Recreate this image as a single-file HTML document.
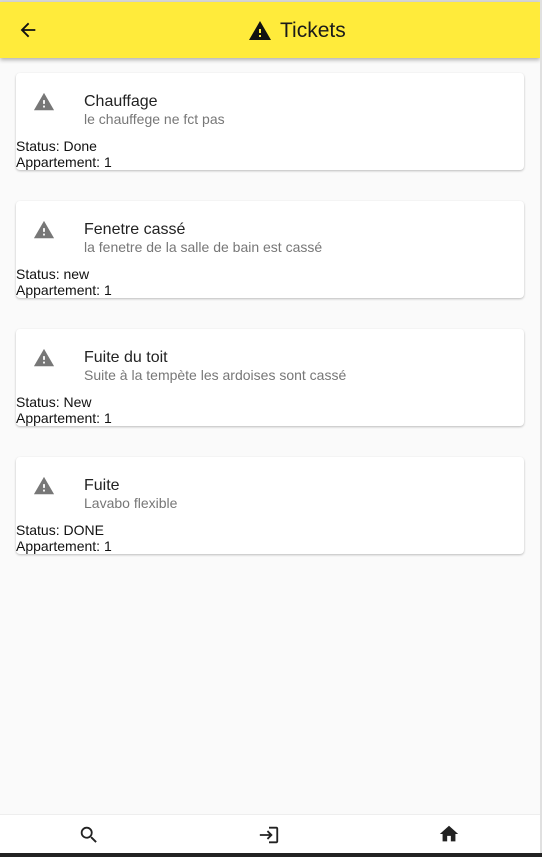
<!DOCTYPE html>
<html><head><style>
*{margin:0;padding:0;box-sizing:border-box}
body{width:542px;height:857px;background:#fafafa;font-family:"Liberation Sans",sans-serif;position:relative;overflow:hidden}
.top{position:absolute;left:0;top:0;width:542px;height:2px;background:#d8d8d8}
.bar{position:absolute;left:0;top:2px;width:540px;height:56px;background:#ffeb3b;box-shadow:0 2px 4px rgba(0,0,0,.3)}
.rline{position:absolute;left:540px;top:0;width:2px;height:857px;background:#e0e0e0}
.title{position:absolute;left:250px;top:17px;font-size:21px;color:#1a1a1a;display:flex;align-items:center}
.card{position:absolute;left:16px;width:508px;height:97px;background:#fff;border-radius:4px;box-shadow:0 1px 2px rgba(0,0,0,.25)}
.card svg{position:absolute;left:17px;top:18px}
.t{position:absolute;left:68px;top:20px;font-size:16px;color:#222}
.s{position:absolute;left:68px;top:38px;font-size:14px;color:#777}
.st{position:absolute;left:0;top:65px;font-size:14px;color:#111;line-height:16px}
.nav{position:absolute;left:0;top:814px;width:540px;height:39px;background:#fff;border-top:1px solid #eee}
.blk{position:absolute;left:0;top:853px;width:542px;height:4px;background:#222}
</style></head><body>
<div class="top"></div>
<div class="bar">
<svg style="position:absolute;left:17px;top:17px" width="22" height="22" viewBox="0 0 24 24"><path d="M20 11H7.83l5.59-5.59L12 4l-8 8 8 8 1.41-1.41L7.83 13H20v-2z" fill="#111"/></svg>
<div class="title"><svg width="24" height="24" viewBox="0 0 24 24" style="margin-right:8px;margin-left:-2px"><path d="M1 21h22L12 2 1 21zm12-3h-2v-2h2v2zm0-4h-2v-4h2v4z" fill="#111"/></svg>Tickets</div>
</div>
<div class="rline"></div>

<div class="card" style="top:73px"><svg width="22" height="22" viewBox="0 0 24 24"><path d="M1 21h22L12 2 1 21zm12-3h-2v-2h2v2zm0-4h-2v-4h2v4z" fill="#777"/></svg><div class="t">Chauffage</div><div class="s">le chauffege ne fct pas</div><div class="st">Status: Done<br>Appartement: 1</div></div>
<div class="card" style="top:201px"><svg width="22" height="22" viewBox="0 0 24 24"><path d="M1 21h22L12 2 1 21zm12-3h-2v-2h2v2zm0-4h-2v-4h2v4z" fill="#777"/></svg><div class="t">Fenetre cassé</div><div class="s">la fenetre de la salle de bain est cassé</div><div class="st">Status: new<br>Appartement: 1</div></div>
<div class="card" style="top:329px"><svg width="22" height="22" viewBox="0 0 24 24"><path d="M1 21h22L12 2 1 21zm12-3h-2v-2h2v2zm0-4h-2v-4h2v4z" fill="#777"/></svg><div class="t">Fuite du toit</div><div class="s">Suite à la tempète les ardoises sont cassé</div><div class="st">Status: New<br>Appartement: 1</div></div>
<div class="card" style="top:457px"><svg width="22" height="22" viewBox="0 0 24 24"><path d="M1 21h22L12 2 1 21zm12-3h-2v-2h2v2zm0-4h-2v-4h2v4z" fill="#777"/></svg><div class="t">Fuite</div><div class="s">Lavabo flexible</div><div class="st">Status: DONE<br>Appartement: 1</div></div>

<div class="nav">
<svg style="position:absolute;left:78px;top:9px" width="22" height="22" viewBox="0 0 24 24"><path d="M15.5 14h-.79l-.28-.27A6.470 6.470 0 0016 9.5 6.5 6.5 0 109.5 16c1.61 0 3.09-.59 4.23-1.57l.27.28v.79l5 4.99L20.49 19l-4.99-5zm-6 0C7.01 14 5 11.990 5 9.5S7.01 5 9.5 5 14 7.01 14 9.5 11.99 14 9.5 14z" fill="#222"/></svg>
<svg style="position:absolute;left:258px;top:9px" width="22" height="22" viewBox="0 0 24 24"><path d="M11 7L9.6 8.4l2.6 2.6H2v2h10.2l-2.6 2.6L11 17l5-5-5-5zm9 12h-8v2h8c1.1 0 2-.9 2-2V5c0-1.1-.9-2-2-2h-8v2h8v14z" fill="#222"/></svg>
<svg style="position:absolute;left:438px;top:8px" width="22" height="22" viewBox="0 0 24 24"><path d="M10 20v-6h4v6h5v-8h3L12 3 2 12h3v8z" fill="#222"/></svg>
</div>
<div class="blk"></div>
</body></html>
